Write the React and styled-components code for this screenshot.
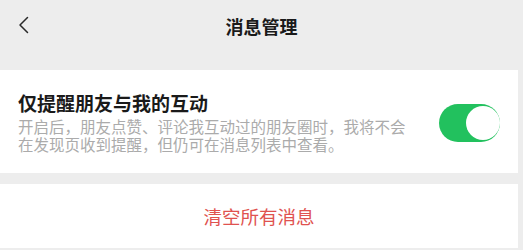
import React, { useState } from "react";
import styled, { createGlobalStyle } from "styled-components";

const GlobalStyle = createGlobalStyle`
  html, body {
    margin: 0;
    padding: 0;
    background: #ededed;
  }
  body {
    font-family: "Noto Sans CJK SC", "Noto Sans", sans-serif;
  }
`;

function App() {
  const [on, setOn] = useState(true);

  return (
    <Page>
      <GlobalStyle />
      <Header>
        <BackButton aria-label="返回">
          <svg width="14" height="20" viewBox="0 0 14 20">
            <path d="M11.5 2.5 L4 10 L11.5 17.5" fill="none" stroke="#2a2a2a" strokeWidth="1.5" strokeLinecap="round" strokeLinejoin="round" />
          </svg>
        </BackButton>
        <Title>消息管理</Title>
      </Header>

      <Panel>
        <SettingRow>
          <SettingText>
            <SettingTitle>仅提醒朋友与我的互动</SettingTitle>
            <SettingDesc>
              开启后，朋友点赞、评论我互动过的朋友圈时，我将不会在发现页收到提醒，但仍可在消息列表中查看。
            </SettingDesc>
          </SettingText>
          <Switch $on={on} onClick={() => setOn(!on)}>
            <Knob $on={on} />
          </Switch>
        </SettingRow>
      </Panel>

      <Panel $gap>
        <DangerButton>清空所有消息</DangerButton>
      </Panel>
    </Page>
  );
}

const Page = styled.div`
  width: 523px;
  height: 250px;
  background: #ededed;
  overflow: hidden;
`;

const Header = styled.div`
  position: relative;
  display: flex;
  align-items: center;
  justify-content: center;
  height: 52px;
  margin-bottom: 18px;
`;

const BackButton = styled.div`
  position: absolute;
  left: 16px;
  top: 15px;
  display: flex;
`;

const Title = styled.div`
  font-size: 18px;
  font-weight: 600;
  color: #1a1a1a;
  margin-top: -1px;
`;

const Panel = styled.div`
  width: 518px;
  background: #fff;
  margin-top: ${(p) => (p.$gap ? "11px" : "0")};
`;

const SettingRow = styled.div`
  display: flex;
  align-items: center;
  padding: 19px 18px 18px 18px;
  height: 66px;
`;

const SettingText = styled.div`
  flex: 1;
  display: flex;
  flex-direction: column;
`;

const SettingTitle = styled.div`
  font-size: 19px;
  font-weight: 700;
  color: #1a1a1a;
  line-height: 24px;
  margin-bottom: 2px;
`;

const SettingDesc = styled.div`
  width: 395px;
  font-size: 15.5px;
  line-height: 18.5px;
  color: #ababab;
`;

const Switch = styled.div`
  position: relative;
  width: 63px;
  height: 38px;
  border-radius: 19px;
  background: ${(p) => (p.$on ? "#22c15e" : "#e5e5e5")};
  margin-left: 26px;
  margin-top: 2px;
  cursor: pointer;
`;

const Knob = styled.div`
  position: absolute;
  top: 2px;
  left: ${(p) => (p.$on ? "27px" : "2px")};
  width: 34px;
  height: 34px;
  border-radius: 50%;
  background: #fff;
`;

const DangerButton = styled.div`
  height: 64px;
  display: flex;
  align-items: center;
  justify-content: center;
  font-size: 18.5px;
  color: #e0524f;
`;

export default App;
